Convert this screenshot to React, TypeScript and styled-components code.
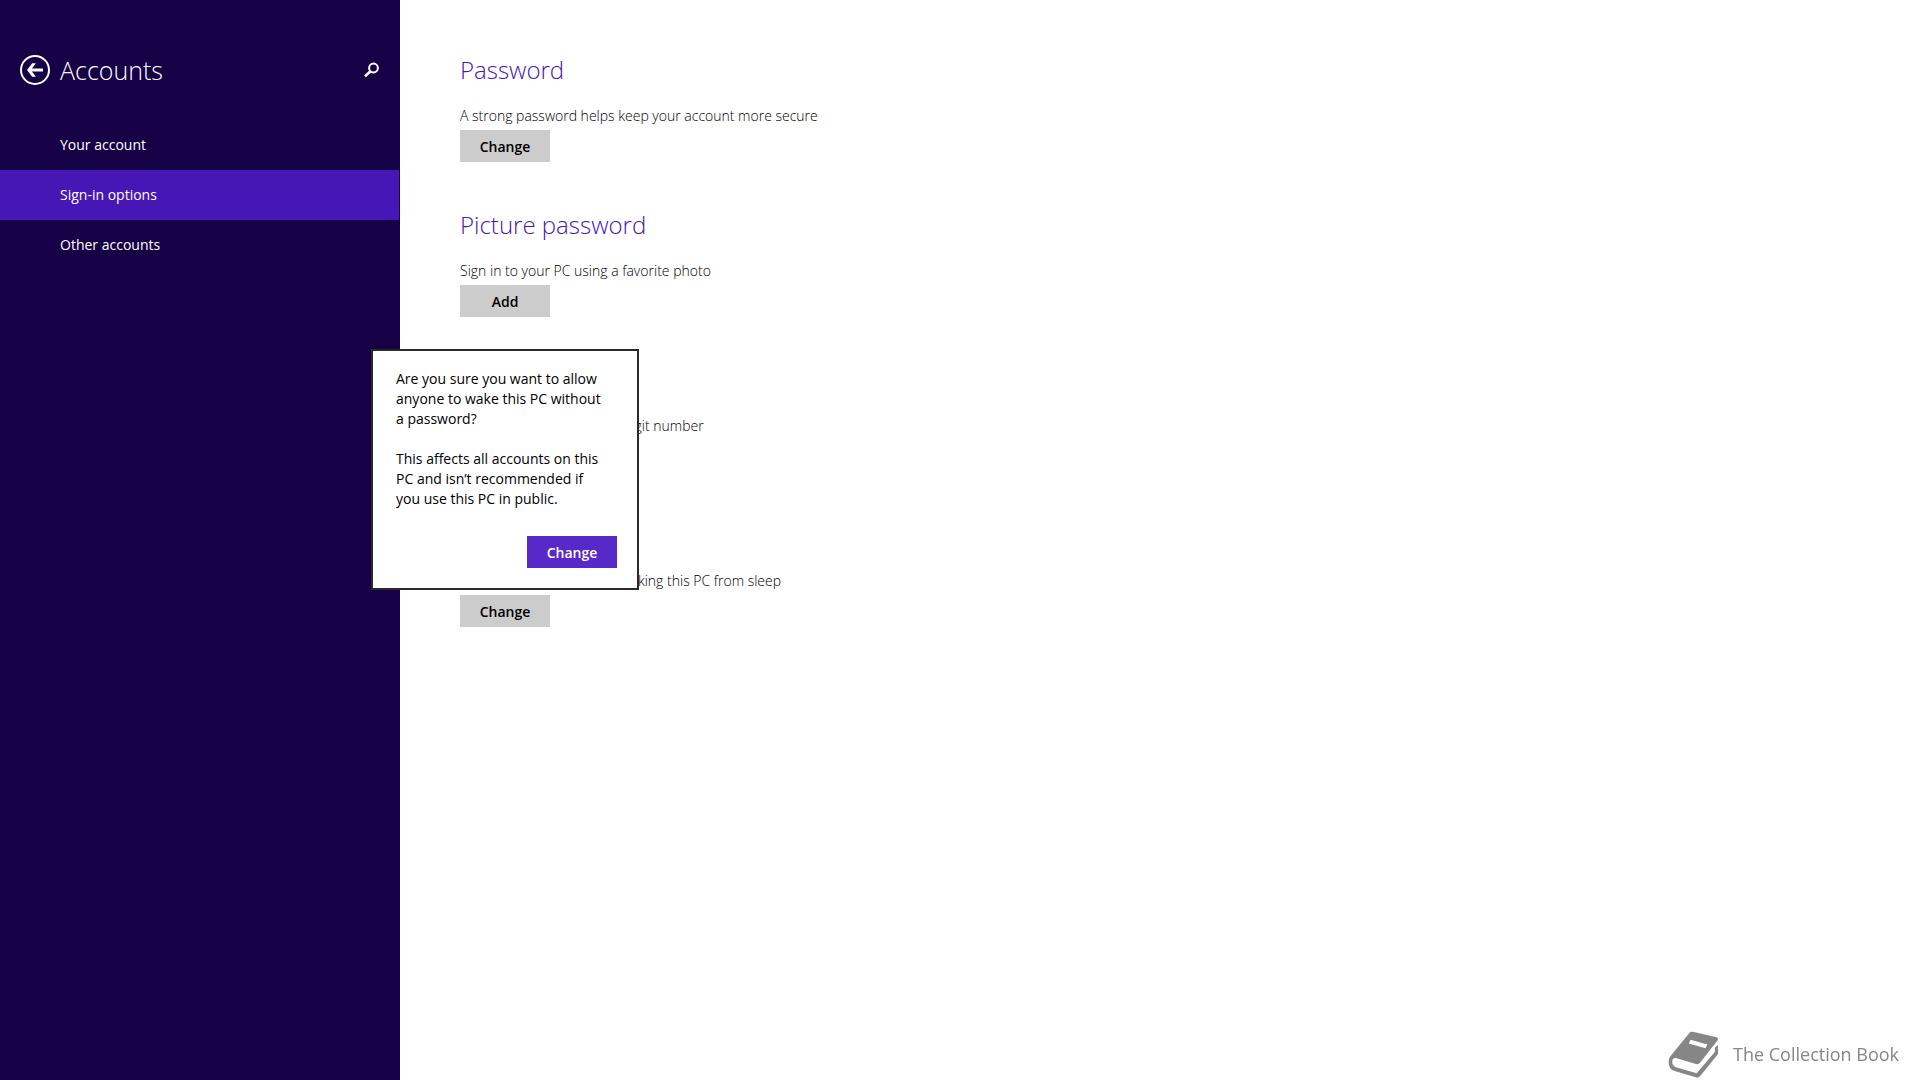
import React from 'react';
import styled, { createGlobalStyle, css } from 'styled-components';

const GlobalStyle = createGlobalStyle`
  *, *::before, *::after { box-sizing: border-box; }
  body {
    margin: 0;
    background: #fff;
    color: #000;
    font-family: 'Segoe UI', 'Open Sans', 'Noto Sans', sans-serif;
    font-size: 14px;
    line-height: 20px;
  }
  h1, h2, p, ul { margin: 0; padding: 0; }
  button { font-family: inherit; }
`;

const Page = styled.div`
  display: flex;
  min-height: 100vh;
`;

const Sidebar = styled.aside`
  flex: 0 0 400px;
  padding-top: 50px;
  background: #160046;
  color: #fff;
`;

const SidebarHeader = styled.header`
  display: flex;
  align-items: center;
  height: 40px;
  padding: 0 20px;
  margin-bottom: 30px;
`;

const IconButton = styled.button`
  display: flex;
  padding: 0;
  border: 0;
  background: none;
  color: inherit;
  cursor: pointer;
`;

const PageTitle = styled.h1`
  flex: 1;
  padding-left: 10px;
  font-size: 25px;
  font-weight: 300;
  line-height: 40px;
`;

const NavList = styled.ul`
  list-style: none;
`;

const NavLink = styled.a<{ $current?: boolean }>`
  display: block;
  margin-right: 1px;
  padding: 0 60px;
  line-height: 50px;
  color: #fff;
  text-decoration: none;
  ${(p) => p.$current && css`background: #4617b4;`}
`;

const Content = styled.main`
  flex: 1;
  display: flex;
  flex-direction: column;
  gap: 43px;
  padding: 50px 60px;
`;

const SectionTitle = styled.h2`
  margin-bottom: 16px;
  color: #4617b4;
  font-size: 24px;
  font-weight: 300;
  line-height: 40px;
`;

const Description = styled.p`
  margin-bottom: 4px;
  font-weight: 300;
`;

const Button = styled.button<{ $accent?: boolean }>`
  display: block;
  width: 90px;
  height: 32px;
  padding: 0;
  border: 0;
  background: ${(p) => (p.$accent ? '#5729c8' : '#ccc')};
  color: ${(p) => (p.$accent ? '#fff' : '#000')};
  font-size: 14px;
  font-weight: 600;
  cursor: pointer;
`;

const Anchor = styled.div`
  position: relative;
  width: 90px;
`;

const Flyout = styled.div`
  position: absolute;
  bottom: calc(100% + 5px);
  left: 50%;
  display: flex;
  flex-direction: column;
  width: 268px;
  padding: 18px 20px 20px 23px;
  border: 2px solid #2a2a2a;
  background: #fff;
  transform: translateX(-50%);
`;

const FlyoutText = styled.p`
  margin-bottom: 20px;
  padding-right: 12px;
`;

const FlyoutActions = styled.div`
  display: flex;
  justify-content: flex-end;
  padding-top: 7px;
`;

const Brand = styled.div`
  position: fixed;
  right: 21px;
  bottom: 0;
  display: flex;
  align-items: center;
  gap: 13px;
  color: #868686;
  font-size: 18px;
  line-height: 52px;
`;

const BackIcon = () => (
  <svg width="30" height="30" viewBox="0 0 30 30" fill="none" stroke="currentColor" aria-hidden="true">
    <circle cx="15" cy="15" r="14" strokeWidth="2" />
    <path d="M23 15H9" strokeWidth="3" />
    <path d="M12.2 8.3h3.7L10.8 15l5.1 6.7h-3.7L7 15z" fill="currentColor" stroke="none" />
  </svg>
);

const SearchIcon = () => (
  <svg width="17" height="16" viewBox="0 0 17 16" fill="none" stroke="currentColor" aria-hidden="true">
    <circle cx="10.5" cy="6" r="4.4" strokeWidth="2" />
    <path d="M7.4 9.2 2 14.4" strokeWidth="2.6" />
  </svg>
);

const BookIcon = () => (
  <svg width="52" height="48" viewBox="0 0 52 48" aria-hidden="true">
    <path
      fill="currentColor"
      fillRule="evenodd"
      d="M21.8 2.6Q22.8 1.4 24.8 1.8L48.5 7.3Q50.8 8.2 49.6 10.2L32 32.8Q30.4 34.6 28 34L9.5 28.4Q5 27 4.2 31Q4 35.5 7.8 37.2L28.7 43.3L46.8 22L47 17.5L50 15V24L31.8 46.6Q30.6 48 28.6 47.4L5.8 40.7Q-.2 38 .8 30.7Q1.2 27.5 3.4 25ZM22.6 9.8L20.8 13.6L37.4 18.2L39.4 14.6Z"
    />
  </svg>
);

const navItems = [
  { label: 'Your account' },
  { label: 'Sign-in options', current: true },
  { label: 'Other accounts' },
];

const sections = [
  { title: 'Password', text: 'A strong password helps keep your account more secure', action: 'Change' },
  { title: 'Picture password', text: 'Sign in to your PC using a favorite photo', action: 'Add' },
  { title: 'PIN', text: 'Sign in quickly with a four-digit number', action: 'Add' },
  {
    title: 'Password policy',
    text: 'Password required when waking this PC from sleep',
    action: 'Change',
    confirm: true,
  },
];

const ConfirmFlyout = () => (
  <Flyout role="dialog" aria-label="Confirm change">
    <FlyoutText>Are you sure you want to allow anyone to wake this PC without a password?</FlyoutText>
    <FlyoutText>This affects all accounts on this PC and isn’t recommended if you use this PC in public.</FlyoutText>
    <FlyoutActions>
      <Button $accent type="button">Change</Button>
    </FlyoutActions>
  </Flyout>
);

export default function App() {
  return (
    <>
      <GlobalStyle />
      <Page>
        <Sidebar>
          <SidebarHeader>
            <IconButton type="button" aria-label="Back"><BackIcon /></IconButton>
            <PageTitle>Accounts</PageTitle>
            <IconButton type="button" aria-label="Search"><SearchIcon /></IconButton>
          </SidebarHeader>
          <nav>
            <NavList>
              {navItems.map((item) => (
                <li key={item.label}>
                  <NavLink href="#" $current={item.current} aria-current={item.current ? 'page' : undefined}>
                    {item.label}
                  </NavLink>
                </li>
              ))}
            </NavList>
          </nav>
        </Sidebar>
        <Content>
          {sections.map((s) => (
            <section key={s.title}>
              <SectionTitle>{s.title}</SectionTitle>
              <Description>{s.text}</Description>
              <Anchor>
                <Button type="button">{s.action}</Button>
                {s.confirm && <ConfirmFlyout />}
              </Anchor>
            </section>
          ))}
        </Content>
      </Page>
      <Brand>
        <BookIcon />
        <span>The Collection Book</span>
      </Brand>
    </>
  );
}
